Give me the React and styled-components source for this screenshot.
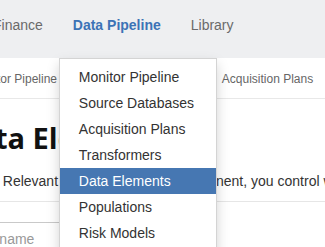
import React from 'react';
import styled, { createGlobalStyle } from 'styled-components';

const GlobalStyle = createGlobalStyle`
  html, body {
    margin: 0;
    padding: 0;
    background: #ffffff;
    overflow: hidden;
  }
  body {
    font-family: "Liberation Sans", Arial, sans-serif;
    color: #333333;
  }
  * {
    box-sizing: border-box;
  }
`;

const Page = styled.div`
  width: 325px;
  height: 247px;
  overflow: hidden;
`;

const TopNav = styled.nav`
  height: 58px;
  background: #eeeff1;
  display: flex;
  align-items: stretch;
  gap: 30px;
  margin-left: -7px;
  font-size: 14px;
`;

const NavItem = styled.div`
  position: relative;
  display: flex;
  align-items: center;
  padding-bottom: 8px;
  color: ${p => (p.$active ? '#3c73b6' : '#6a6a6a')};
  font-weight: ${p => (p.$active ? 700 : 400)};
  white-space: nowrap;
`;

const Dropdown = styled.ul`
  position: absolute;
  top: 100%;
  left: -14px;
  width: 158px;
  margin: 0;
  padding: 5px 0;
  list-style: none;
  background: #ffffff;
  border: 1px solid rgba(0, 0, 0, 0.17);
  box-shadow: 0 6px 12px rgba(0, 0, 0, 0.175);
  z-index: 10;
  font-weight: 400;
`;

const DropItem = styled.li`
  padding: 3px 19px;
  line-height: 20px;
  font-size: 14px;
  white-space: nowrap;
  color: ${p => (p.$active ? '#ffffff' : '#333333')};
  background: ${p => (p.$active ? '#4677b2' : 'transparent')};
`;

const SubNav = styled.div`
  height: 41px;
  border-bottom: 1px solid #e8e8e8;
  display: flex;
  align-items: center;
  gap: 33px;
  margin-left: -29px;
  padding-top: 1px;
  font-size: 12px;
  color: #666666;
  white-space: nowrap;
`;

const Content = styled.main`
  margin-left: -40px;
  padding-top: 19px;
`;

const Title = styled.h1`
  margin: 0 0 0 -4px;
  font-family: "Open Sans", "Liberation Sans", sans-serif;
  font-weight: 700;
  font-size: 29px;
  line-height: 40px;
  color: #111111;
  white-space: nowrap;
`;

const Lead = styled.p`
  margin: 13px 0 0;
  font-size: 14px;
  line-height: 20px;
  color: #333333;
  white-space: nowrap;
`;

const Divider = styled.hr`
  margin: 10px 0 0;
  border: 0;
  border-top: 1px solid #e6e6e6;
  width: 400px;
`;

const SearchInput = styled.input`
  display: block;
  margin-top: 20px;
  width: 240px;
  height: 34px;
  padding: 0 1px;
  border: 1px solid #c9c9c9;
  border-radius: 3px;
  font-family: "Liberation Sans", Arial, sans-serif;
  font-size: 14px;
  color: #333;

  &::placeholder {
    color: #999999;
  }
`;

const menu = [
  'Monitor Pipeline',
  'Source Databases',
  'Acquisition Plans',
  'Transformers',
  'Data Elements',
  'Populations',
  'Risk Models',
  'Scorecards'
];

const subMenu = ['Monitor Pipeline', 'Source Databases', 'Acquisition Plans', 'Transformers'];

export default function App() {
  return (
    <Page>
      <GlobalStyle />
      <TopNav>
        <NavItem>Finance</NavItem>
        <NavItem $active>
          Data Pipeline
          <Dropdown>
            {menu.map(item => (
              <DropItem key={item} $active={item === 'Data Elements'}>{item}</DropItem>
            ))}
          </Dropdown>
        </NavItem>
        <NavItem>Library</NavItem>
      </TopNav>
      <SubNav>
        {subMenu.map(item => (
          <span key={item}>{item}</span>
        ))}
      </SubNav>
      <Content>
        <Title>Data Elements</Title>
        <Lead>Within Relevant the Data Element component, you control which fields are tracked.</Lead>
        <Divider />
        <SearchInput placeholder="Enter name" />
      </Content>
    </Page>
  );
}
